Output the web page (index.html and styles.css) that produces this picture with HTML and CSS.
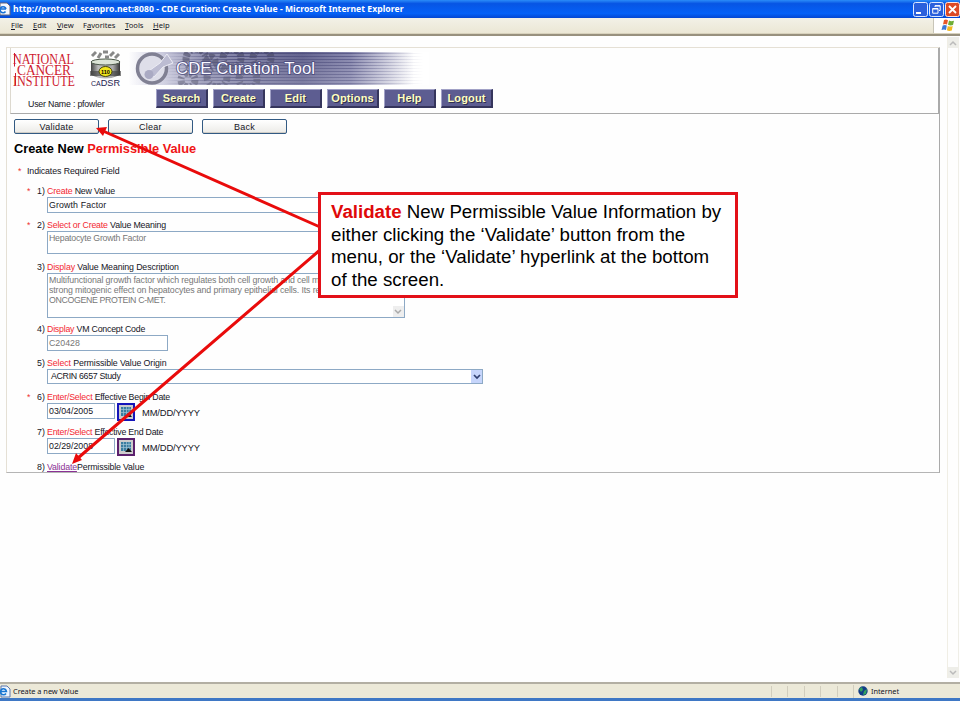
FILE: index.html
```html
<!DOCTYPE html>
<html lang="en">
<head>
<meta charset="utf-8">
<title>CDE Curation: Create Value</title>
<link rel="stylesheet" href="styles.css">
</head>
<body>
<div class="window">
  <header class="titlebar">
    <svg class="page-icon" width="11" height="14" viewBox="0 0 11 14"><path d="M0 1H7L10 4V13H0Z" fill="#f4f8ff" stroke="#667"/><path d="M1 7H6M6 7A3 3 0 1 0 5.5 9.5" fill="none" stroke="#1771d6" stroke-width="1.6"/></svg>
    <span class="title">http://protocol.scenpro.net:8080 - CDE Curation: Create Value - Microsoft Internet Explorer</span>
    <div class="controls">
      <svg width="15" height="15" viewBox="0 0 15 15"><rect x=".5" y=".5" width="14" height="14" rx="2" fill="#2b60dc" stroke="#dce8ff"/><path d="M3 11H8" stroke="#fff" stroke-width="2"/></svg>
      <svg width="15" height="15" viewBox="0 0 15 15"><rect x=".5" y=".5" width="14" height="14" rx="2" fill="#2b60dc" stroke="#dce8ff"/><path d="M6 5V3.7H11.2V8.5H10M6 4H11M3.7 6.5H9V11.2H3.7ZM3.5 7H9" fill="none" stroke="#fff"/></svg>
      <svg width="15" height="15" viewBox="0 0 15 15"><rect x=".5" y=".5" width="14" height="14" rx="2" fill="#dc4a26" stroke="#ffe5de"/><path d="M4 4L11 11M11 4L4 11" stroke="#fff" stroke-width="1.8"/></svg>
    </div>
  </header>
  <nav class="menubar">
    <span class="m-file"><u>F</u>ile</span><span class="m-edit"><u>E</u>dit</span><span class="m-view"><u>V</u>iew</span><span class="m-fav">F<u>a</u>vorites</span><span class="m-tools"><u>T</u>ools</span><span class="m-help"><u>H</u>elp</span>
    <div class="flag"><svg width="14" height="13" viewBox="0 0 14 13"><path d="M3 1Q5 0 7 1.2L6 5.5Q4 4.5 2 5.5Z" fill="#e8572a"/><path d="M8 1.5Q10 2.8 13 1.8L12 6Q9.500 7 7 5.800Z" fill="#6fae35"/><path d="M1.700 6.500Q4 5.500 5.800 6.500L5 11Q3 10 .5 11Z" fill="#3c78d8"/><path d="M6.800 7Q9 8 11.700 7L10.800 11.500Q8 12.500 5.900 11.300Z" fill="#f2b81f"/></svg></div>
  </nav>
  <main class="viewport">
    <section class="panel">
      <header class="banner">
        <div class="brand">
          <svg class="brand-art" width="416" height="37" viewBox="0 0 416 37">
            <defs>
              <linearGradient id="fade"><stop offset="0" stop-color="#fff"/><stop offset=".1" stop-color="#d0d0e2"/><stop offset=".25" stop-color="#8f8fb0"/><stop offset=".58" stop-color="#62628e"/><stop offset=".74" stop-color="#8686ad"/><stop offset=".95" stop-color="#fff"/></linearGradient>
              <linearGradient id="lines" gradientUnits="userSpaceOnUse" x1="151" y1="0" x2="410" y2="0"><stop offset="0" stop-color="#3f3f70" stop-opacity="0"/><stop offset=".28" stop-color="#3f3f70"/><stop offset=".72" stop-color="#4f4f80"/><stop offset="1" stop-color="#8888aa" stop-opacity="0"/></linearGradient>
              <linearGradient id="shade" x2="0" y2="1"><stop offset="0" stop-color="#fff" stop-opacity="0"/><stop offset=".55" stop-color="#fff" stop-opacity=".12"/><stop offset="1" stop-color="#fff" stop-opacity=".2"/></linearGradient>
              <linearGradient id="steel"><stop offset="0" stop-color="#444"/><stop offset=".25" stop-color="#bbb"/><stop offset=".75" stop-color="#aaa"/><stop offset="1" stop-color="#333"/></linearGradient>
              <clipPath id="bar"><rect x="115" y="1" width="301" height="33"/></clipPath>
            </defs>
            <g font-family="Liberation Serif, serif" fill="#cf1b30">
              <text y="12.500" font-size="15.500" textLength="61" lengthAdjust="spacingAndGlyphs">NATIONAL</text>
              <text x="4" y="23.500" font-size="15" textLength="54" lengthAdjust="spacingAndGlyphs">CANCER</text>
              <text y="34.500" font-size="15.500" textLength="62" lengthAdjust="spacingAndGlyphs">INSTITUTE</text>
              <path d="M1.500 2V15.500M2.500 22V34.500" stroke="#cf1b30" stroke-width="1"/>
            </g>
            <g transform="translate(76 0)">
              <path d="M3 5L7 1M9 7L12 2M14 1H19M21 5L25 1M26 7L30 3M16 6H20" stroke="#888" stroke-width="3"/>
              <path d="M2 10V24Q16 31 31 24V10Z" fill="url(#steel)"/>
              <ellipse cx="16.500" cy="11" rx="14.500" ry="3" fill="#dbe3d6" stroke="#4b5749"/>
              <path d="M1 20H32V25H1Z" fill="#444" opacity=".65"/>
              <ellipse cx="16.500" cy="20.500" rx="6.500" ry="5" fill="#f1e51c" stroke="#454510"/>
              <text x="12" y="22.500" font-size="5.500" font-weight="bold" font-family="Liberation Sans">110</text>
              <text x="2" y="34.500" font-size="8.500" fill="#222250" font-family="Liberation Sans" textLength="29" lengthAdjust="spacingAndGlyphs"><tspan font-size="6.500">CA</tspan>DSR</text>
            </g>
            <g clip-path="url(#bar)">
              <rect x="115" y="1" width="301" height="33" fill="url(#fade)"/>
              <g fill="none" stroke="#3d3d58" stroke-width="7" stroke-dasharray="4 2 2 3 5 1" opacity=".55"><circle cx="175" cy="29" r="7"/><circle cx="183" cy="8" r="10"/><circle cx="204" cy="26" r="10"/><circle cx="219" cy="7" r="9"/><circle cx="235" cy="28" r="9"/><circle cx="249" cy="7" r="9"/><circle cx="198" cy="10" r="4"/></g>
              <path d="M151 2.500H416M151 5.500H416M151 8.500H416M151 11.500H416M151 14.500H416M151 17.500H416M151 20.500H416M151 23.500H416M151 26.500H416M151 29.500H416M151 32.500H416" stroke="url(#lines)" opacity=".75"/>
              <rect x="115" y="1" width="301" height="33" fill="url(#shade)"/>
            </g>
            <circle cx="139" cy="17.500" r="14.500" fill="#dedee9" stroke="#808093" stroke-width="3.500"/>
            <path d="M133 22L147 12L154 3L160 12L150 16L141 26Z" fill="#bcbcd2" stroke="#ececf4"/><circle cx="136" cy="23.500" r="4.500" fill="#aaaac3"/>
            <text x="163" y="23" font-family="Liberation Sans" font-size="16" textLength="139" lengthAdjust="spacingAndGlyphs" fill="#f8f8ff" stroke="#4b4b7d" stroke-width="1.500" paint-order="stroke">CDE Curation Tool</text>
          </svg>
        </div>
        <div class="navrow">
          <div class="user">User Name : pfowler</div>
          <nav class="tabs"><a>Search</a><a>Create</a><a>Edit</a><a>Options</a><a>Help</a><a>Logout</a></nav>
        </div>
      </header>
      <div class="buttons"><button>Validate</button><button>Clear</button><button>Back</button></div>
      <h1><span class="h-a">Create New</span> <span class="red">Permissible Value</span></h1>
      <p class="required"><i>*</i>Indicates Required Field</p>
      <div class="form">
        <div class="row r1"><i>*</i><b>1)</b><div><label><em>Create</em> New Value</label><div class="field wide">Growth Factor</div></div></div>
        <div class="row r2"><i>*</i><b>2)</b><div><label><em>Select or Create</em> Value Meaning</label><div class="field wide area off">Hepatocyte Growth Factor</div></div></div>
        <div class="row r3"><i></i><b>3)</b><div><label><em>Display</em> Value Meaning Description</label><div class="field wide memo off"><span class="l1">Multifunctional growth factor which regulates both cell growth and cell m</span><span class="l2">strong mitogenic effect on hepatocytes and primary epithelial cells. Its re</span><span class="l3">ONCOGENE PROTEIN C-MET.</span><span class="memo-down"><svg width="8" height="6"><path d="M1 1L4 4L7 1" fill="none" stroke="#aaa" stroke-width="1.500"/></svg></span></div></div></div>
        <div class="row r4"><i></i><b>4)</b><div><label><em>Display</em> VM Concept Code</label><div class="field code off">C20428</div></div></div>
        <div class="row r5"><i></i><b>5)</b><div><label><em>Select</em> Permissible Value Origin</label><div class="field select"><span>ACRIN 6657 Study</span><span class="drop"><svg width="8" height="7"><path d="M1 2L4 5L7 2" fill="none" stroke="#304070" stroke-width="1.700"/></svg></span></div></div></div>
        <div class="row r6"><i>*</i><b>6)</b><div><label><em>Enter/Select</em> Effective Begin Date</label><div class="date"><div class="field">03/04/2005</div><span class="cal"><svg width="14" height="14" viewBox="0 0 14 14"><path d="M0 0H14V14H0Z" fill="#ccc"/><path d="M2 2H12V11H2Z" fill="#397da0"/><path d="M2 4.500H12M2 7.500H12M4.500 2V11M7.500 2V11M10 2V11" stroke="#9fc4d5" stroke-width=".7"/><path d="M6 12L9.500 8L13 12Z" fill="#111"/></svg></span><span class="hint">MM/DD/YYYY</span></div></div></div>
        <div class="row r7"><i></i><b>7)</b><div><label><em>Enter/Select</em> Effective End Date</label><div class="date"><div class="field">02/29/2008</div><span class="cal visited"><svg width="14" height="14" viewBox="0 0 14 14"><path d="M0 0H14V14H0Z" fill="#ccc"/><path d="M2 2H12V11H2Z" fill="#397da0"/><path d="M2 4.500H12M2 7.500H12M4.500 2V11M7.500 2V11M10 2V11" stroke="#9fc4d5" stroke-width=".7"/><path d="M6 12L9.500 8L13 12Z" fill="#111"/></svg></span><span class="hint">MM/DD/YYYY</span></div></div></div>
        <div class="row r8"><i></i><b>8)</b><div><label><a class="link">Validate</a>Permissible Value</label></div></div>
      </div>
    </section>
    <aside class="scroll"><span><svg width="8" height="6"><path d="M1 5L4 2L7 5" fill="none" stroke="#bbb" stroke-width="1.500"/></svg></span><span><svg width="8" height="6"><path d="M1 1L4 4L7 1" fill="none" stroke="#bbb" stroke-width="1.500"/></svg></span></aside>
  </main>
  <footer class="status">
    <svg width="11" height="13" viewBox="0 0 11 13"><path d="M1 1H7L10 4V12H1Z" fill="#eef5ff" stroke="#5d79ae"/><path d="M1 6.500H6.500A3 3 0 1 0 6 8.500" fill="none" stroke="#1876d2" stroke-width="1.500"/></svg>
    <span class="st-text">Create a new Value</span>
    <div class="cells"><span></span><span></span><span></span><span></span><span></span></div>
    <div class="zone"><svg width="10" height="10" viewBox="0 0 10 10"><circle cx="5" cy="5" r="4.700" fill="#123b87"/><path d="M1 3L4 1L5 4L3 6ZM6 5L9 3L8 8L5 9Z" fill="#31a15e"/></svg><span>Internet</span></div>
  </footer>
</div>
<svg class="arrows" width="960" height="720"><g stroke="#e90b0b" stroke-width="3"><path d="M320 227L103 131M320 250L78 458"/></g><path d="M96 128L107 127L103 136ZM72 464L76 453L82 460Z" fill="#e90b0b"/></svg>
<aside class="callout"><div class="c1"><strong>Validate</strong> New Permissible Value Information by</div><div class="c2">either clicking the ‘Validate’ button from the</div><div class="c3">menu, or the ‘Validate’ hyperlink at the bottom</div><div class="c4">of the screen.</div></aside>
</body>
</html>
```
FILE: styles.css
```css
* { box-sizing: border-box; }
body { margin: 0; width: 960px; height: 720px; background: #fff; overflow: hidden; font: 8.8px/12px "Liberation Sans", sans-serif; color: #151525; }
svg { display: block; flex: none; }
.window { height: 701px; display: flex; flex-direction: column; border-bottom: 3px solid #3f78c5; }
.titlebar { height: 18px; flex: none; display: flex; align-items: center; background: linear-gradient(#2b8cf8, #0755e4 20%, #0561f7 75%, #0447d2); color: #fff; }
.title { margin-left: 2px; font: bold 8.6px/16px "Noto Sans", sans-serif; white-space: nowrap; width: 392px; letter-spacing: 0.05px; }
.controls { margin-left: auto; display: flex; gap: 1px; }
.menubar { height: 15px; flex: none; display: flex; background: linear-gradient(#f3f1e7, #ebe7d5); font: 7.6px/15px "Noto Sans", sans-serif; }
.menubar span { flex: none; white-space: nowrap; }
.m-file { margin-left: 11px; width: 22px; } .m-edit { width: 24px; } .m-view { width: 26px; } .m-fav { width: 42px; } .m-tools { width: 28px; }
.flag { margin-left: auto; width: 27px; padding: 1px 7px; background: #fff; border-left: 1px solid #c8c5b8; }
.viewport { flex: 1; min-height: 0; display: flex; border-top: 1px solid #d8d2bd; box-shadow: inset 0 2px #98917e; padding: 13px 0 0 6px; background: #fefefe; }
.panel { width: 934px; height: 426px; border: 1px solid #e5e0d5; border-right: 1px solid #aaa; border-bottom: 1px solid #b5b5b5; padding-left: 3px; }
.banner { height: 66px; border-left: 1px solid #ddd9cf; border-bottom: 1px solid #aaa; border-right: 1px solid #aaa; }
.brand { padding: 3px 0 0 2px; }
.brand-art { overflow: visible; }
.navrow { display: flex; }
.user { width: 145px; padding: 10px 0 0 17px; white-space: nowrap; letter-spacing: -.2px; }
.tabs { display: flex; gap: 5px; padding-top: 1px; }
.tabs a { width: 52px; height: 19px; border: solid; border-width: 1px 2px 2px 1px; border-color: #a1a1c6 #35355c #35355c #a1a1c6; background: #5d5d91; color: #ffffc1; text-align: center; font: bold 11px/16px "Liberation Sans", sans-serif; letter-spacing: .15px; text-shadow: 1px 1px #30304f; }
.buttons { display: flex; gap: 9px; padding: 5px 0 0 4px; }
button { width: 85px; height: 15px; padding: 0; border: 1px solid #325a83; border-radius: 2px; background: linear-gradient(#fff, #ecebe7); box-shadow: inset 0 -1px #d0cdc6; font: 9px/12px "Liberation Sans", sans-serif; letter-spacing: .25px; color: #151525; }
h1 { font: bold 12.8px/16px "Liberation Sans", sans-serif; margin: 7px 0 0 4px; color: #000; white-space: nowrap; }
.red { color: #f01515; }
.required { display: flex; margin: 8px 0 0 8px; letter-spacing: -.1px; }
.required i { width: 9px; }
i { font-style: normal; color: #e33; }
.form { margin-top: 8px; }
.row { display: grid; grid-template-columns: 10px 10px 1fr; padding-left: 17px; white-space: nowrap; }
.row b { font-weight: normal; }
.row label { display: block; height: 12px; letter-spacing: -.17px; }
.row em { font-style: normal; color: #f32832; }
.r1, .r4, .r5 { height: 34px; } .r2 { height: 42px; } .r3 { height: 62px; } .r6, .r7 { height: 35px; } .r8 { height: 12px; }
.row.r4 label, .row.r7 label { letter-spacing: -.22px; }
.row.r3 label { letter-spacing: -.12px; }
.row.r6 label { letter-spacing: -.21px; }
.row.r5 label { letter-spacing: -.1px; }
.row.r8 label { letter-spacing: -.15px; }
.field { height: 16px; border: 1px solid #8da9c5; background: #fff; padding-left: 1px; line-height: 14px; }
.off { color: #777; }
.r1 .field { letter-spacing: .12px; }
.wide { width: 358px; }
.area { height: 23px; line-height: 12px; letter-spacing: -.24px; }
.memo { height: 45px; line-height: 10.200px; padding-top: 1px; position: relative; letter-spacing: -.13px; }
.memo .l3 { letter-spacing: -.36px; }
.memo > span { display: block; width: 340px; overflow: hidden; }
.memo > .memo-down { position: absolute; width: 11px; height: 11px; right: 0; bottom: 0; padding: 3px 1px; background: #eee; }
.code { width: 121px; }
.select { width: 436px; height: 15px; display: flex; justify-content: space-between; line-height: 13px; padding-left: 3px; letter-spacing: -.3px; }
.drop { width: 11px; padding: 3px 2px; background: #c6d5fb; }
.date { display: flex; align-items: flex-start; }
.date .field { width: 68px; }
.cal { border: 2px solid #1515ba; margin-left: 2px; width: 18px; height: 18px; }
.visited { border-color: #5b206d; }
.hint { margin: 4px 0 0 7px; font-size: 9.400px; letter-spacing: -.15px; }
.link { color: #8a3194; text-decoration: underline; }
.scroll { margin: -10px 1px 4px auto; width: 12px; border-left: 1px solid #f0eee5; border-right: 1px solid #efeee7; display: flex; flex-direction: column; justify-content: space-between; }
.scroll span { height: 11px; padding: 3px 1px; background: #eeeee9; }
.status { height: 16px; flex: none; display: flex; align-items: center; background: #ece9d8; border-top: 2px solid #b3afa3; font: 7.4px/13px "Noto Sans", sans-serif; letter-spacing: -.04px; }
.st-text { margin-left: 2px; }
.cells { margin-left: auto; display: flex; }
.cells span { width: 16.500px; height: 11px; border-left: 1px solid #d2cebe; }
.zone { width: 107px; border-left: 1px solid #d2cebe; padding-left: 4px; display: flex; align-items: center; gap: 3px; }
.arrows { position: absolute; left: 0; top: 0; }
.callout { position: absolute; left: 318px; top: 192px; width: 420px; height: 106px; border: 3px solid #e31018; background: #fff; padding: 6px 0 0 10px; color: #000; font: 18.7px/22.500px "Liberation Sans", sans-serif; white-space: nowrap; }
.callout strong { color: #df0909; }
```
